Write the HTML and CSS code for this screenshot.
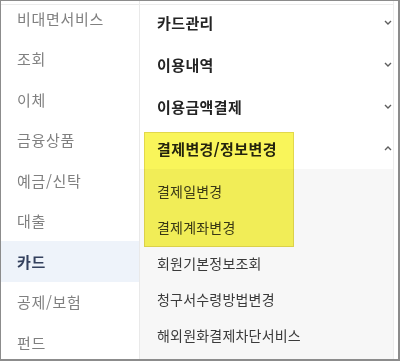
FILE: index.html
```html
<!DOCTYPE html>
<html lang="ko">
<head>
<meta charset="utf-8">
<link rel="stylesheet" href="styles.css">
</head>
<body>
<div class="frame">
  <ul class="left">
    <li>비대면서비스</li>
    <li>조회</li>
    <li>이체</li>
    <li>금융상품</li>
    <li>예금/신탁</li>
    <li>대출</li>
    <li class="on">카드</li>
    <li>공제/보험</li>
    <li>펀드</li>
  </ul>
  <div class="right">
    <div class="head"><span>카드관리</span><svg class="chev" viewBox="0 0 8 5" width="8" height="5"><path d="M1 1 L4 4 L7 1" /></svg></div>
    <div class="head"><span>이용내역</span><svg class="chev" viewBox="0 0 8 5" width="8" height="5"><path d="M1 1 L4 4 L7 1" /></svg></div>
    <div class="head"><span>이용금액결제</span><svg class="chev" viewBox="0 0 8 5" width="8" height="5"><path d="M1 1 L4 4 L7 1" /></svg></div>
    <div class="head"><span>결제변경/정보변경</span><svg class="chev" viewBox="0 0 8 5" width="8" height="5"><path d="M1 4 L4 1 L7 4" /></svg></div>
    <ul class="sub">
      <li>결제일변경</li>
      <li>결제계좌변경</li>
      <li>회원기본정보조회</li>
      <li>청구서수령방법변경</li>
      <li>해외원화결제차단서비스</li>
    </ul>
  </div>
  <div class="mark"></div>
</div>
</body>
</html>
```

FILE: styles.css
```css
* { box-sizing: border-box; }
html, body { margin: 0; padding: 0; background: #fff; }
body {
  font-family: "Noto Sans CJK KR", "Noto Sans", sans-serif;
}
.frame {
  position: relative;
  width: 400px;
  height: 361px;
  border: 1px solid #8c8c8c;
  border-right-width: 2px;
  border-bottom-width: 2px;
  display: flex;
  overflow: hidden;
  background: #fff;
}
.frame::before {
  content: "";
  position: absolute;
  top: 3px;
  left: 0;
  right: 4px;
  height: 1px;
  background: #ececec;
  z-index: 2;
}
.left {
  list-style: none;
  margin: -3px 0 0 0;
  padding: 0;
  width: 139px;
  flex: none;
  border-right: 1px solid #e9e9e9;
}
.left li {
  height: 40.5px;
  display: flex;
  align-items: center;
  padding-left: 16px;
  font-size: 15px;
  letter-spacing: 0.7px;
  color: #808080;
}
.left li.on {
  background: #eef3fa;
  color: #34415e;
  font-weight: 700;
}
.right {
  flex: none;
  width: 254px;
  border-right: 1px solid #ececec;
  display: flex;
  flex-direction: column;
  background: #fff;
}
.head {
  height: 42px;
  display: flex;
  align-items: center;
  justify-content: space-between;
  padding: 0 1px 0 17px;
  font-size: 15px;
  letter-spacing: 0.4px;
  font-weight: 700;
  color: #242424;
}
.chev path {
  fill: none;
  stroke: #5e5e5e;
  stroke-width: 1.4;
}
.sub {
  list-style: none;
  margin: 0;
  padding: 4px 0 0 0;
  flex: 1;
  background: #f7f7f7;
}
.sub li {
  height: 36px;
  display: flex;
  align-items: center;
  padding-left: 17px;
  font-size: 14px;
  letter-spacing: 0.2px;
  color: #3a3a3a;
}
.mark {
  position: absolute;
  left: 143px;
  top: 131px;
  width: 150px;
  height: 115px;
  background: #f9f55a;
  border: 1px solid #e2d84c;
  mix-blend-mode: multiply;
  z-index: 3;
}
```
